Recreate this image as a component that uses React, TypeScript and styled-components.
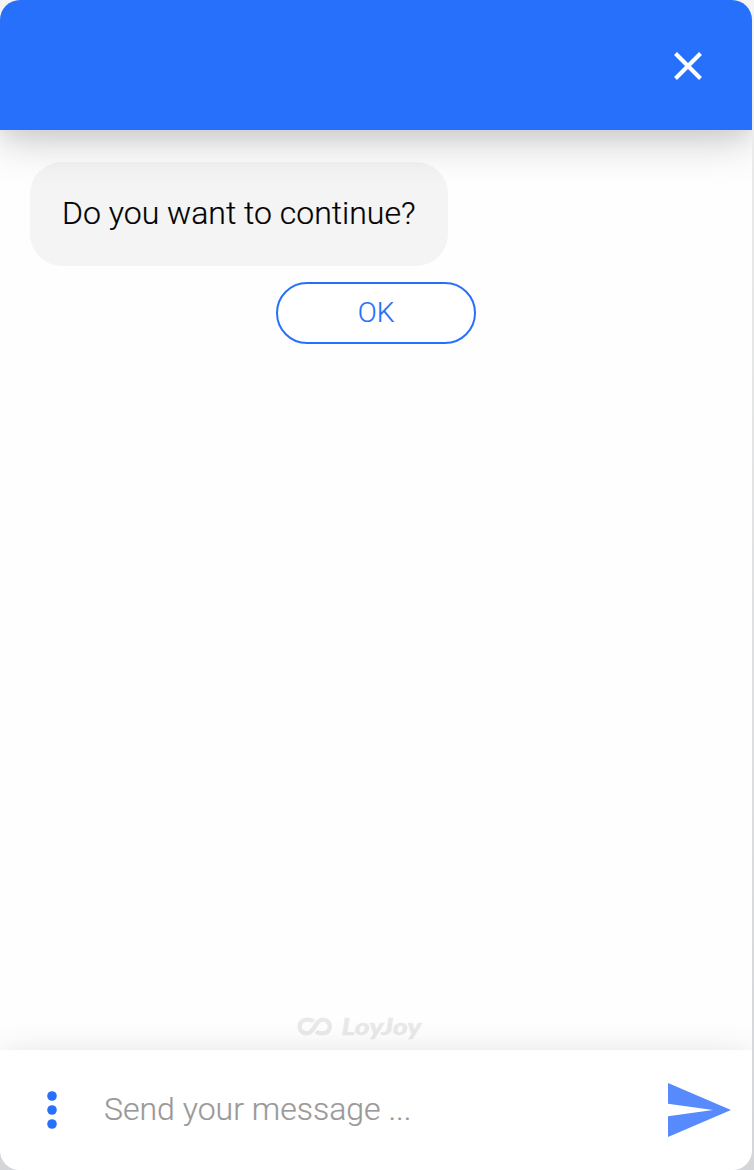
import React from "react";
import styled, { createGlobalStyle } from "styled-components";

const Global = createGlobalStyle`
  * { box-sizing: border-box; }
  body { margin: 0; background: linear-gradient(#f5f5f5, #e9e9e9 15%, #d4d5d8); }
`;

const Widget = styled.main`
  display: flex;
  flex-direction: column;
  width: 752px;
  height: 1170px;
  border-radius: 20px;
  overflow: hidden;
  background: #fefefe;
  font-family: Roboto, "Liberation Sans", sans-serif;
  font-weight: 300;
  -webkit-text-stroke: 0.2px;
`;

const Header = styled.header`
  display: flex;
  align-items: center;
  justify-content: flex-end;
  flex: 0 0 130px;
  padding: 2px 40px 0 0;
  background: #2770fb;
  box-shadow: 0 12px 40px rgba(0, 0, 0, 0.19), 0 8px 16px rgba(0, 0, 0, 0.05);
  z-index: 1;
`;

const IconButton = styled.button`
  display: flex;
  padding: 0;
  border: 0;
  background: none;
`;

const Messages = styled.section`
  display: flex;
  flex-direction: column;
  flex: 1;
  padding: 32px 30px 7px;
`;

const Bubble = styled.div`
  align-self: flex-start;
  height: 104px;
  padding: 0 32px;
  border-radius: 32px;
  background: #f4f4f4;
  color: #000;
  font-size: 32px;
  line-height: 102px;
  width: 418px;
  white-space: nowrap;
`;

const Reply = styled.button`
  align-self: center;
  width: 200px;
  height: 62px;
  margin-top: 16px;
  padding: 0 0 2px;
  border: 2px solid #2770fb;
  border-radius: 31px;
  background: #fff;
  color: #2770fb;
  font: inherit;
  font-size: 28px;
`;

const Brand = styled.div`
  display: flex;
  margin: auto 0 0 266px;
`;

const Footer = styled.footer`
  display: flex;
  align-items: center;
  flex: 0 0 120px;
  padding: 0 20px 0 40px;
  background: #fff;
  box-shadow: 0 12px 40px rgba(0, 0, 0, 0.19);
  z-index: 1;
`;

const Input = styled.input`
  flex: 1;
  min-width: 0;
  margin: 0 20px 2px 40px;
  padding: 0;
  border: 0;
  outline: 0;
  background: none;
  font: inherit;
  font-size: 32px;
  &::placeholder { color: #999; opacity: 1; -webkit-text-stroke: 0.2px #999; }
`;

export default function App() {
  return (
    <>
      <Global />
      <Widget>
        <Header>
          <IconButton aria-label="Close">
            <svg width="48" height="48" viewBox="0 0 48 48">
              <path d="M11.500 11.500 36.500 36.500M36.500 11.500 11.500 36.500" stroke="#fff" strokeWidth="4.1" />
            </svg>
          </IconButton>
        </Header>
        <Messages>
          <Bubble>Do you want to continue?</Bubble>
          <Reply>OK</Reply>
          <Brand>
            <svg width="130" height="36" viewBox="0 0 130 36">
              <g fill="none" stroke="#e9e9e9" strokeWidth="4.4">
                <path d="M17.600 14.500C15.800 12.700 13.500 12.600 10.500 12.600a6.900 6.900 0 0 0 0 13.800c4.200 0 6.200-3.100 8.300-6.900s4.100-6.900 8.200-6.900a6.900 6.900 0 0 1 0 13.800c-3 0-5.300-.1-7.100-1.900" />
              </g>
              <text x="45.500" y="27.600" fill="#e9e9e9" stroke="#e9e9e9" strokeWidth="0.300" fontFamily="Lato, sans-serif" fontWeight="900" fontStyle="italic" fontSize="22.800" textLength="80" lengthAdjust="spacingAndGlyphs">LoyJoy</text>
            </svg>
          </Brand>
        </Messages>
        <Footer>
          <IconButton aria-label="Menu">
            <svg width="24" height="48" viewBox="0 0 24 48" fill="#2770fb">
              <circle cx="12" cy="10" r="4.8" />
              <circle cx="12" cy="24" r="4.8" />
              <circle cx="12" cy="38" r="4.8" />
            </svg>
          </IconButton>
          <Input placeholder="Send your message ..." />
          <IconButton aria-label="Send">
            <svg width="64" height="54" viewBox="0 0 64 54">
              <path d="M0 0 63 27 0 54V33.200L45 27 0 20.800Z" fill="#578bfd" />
            </svg>
          </IconButton>
        </Footer>
      </Widget>
    </>
  );
}
